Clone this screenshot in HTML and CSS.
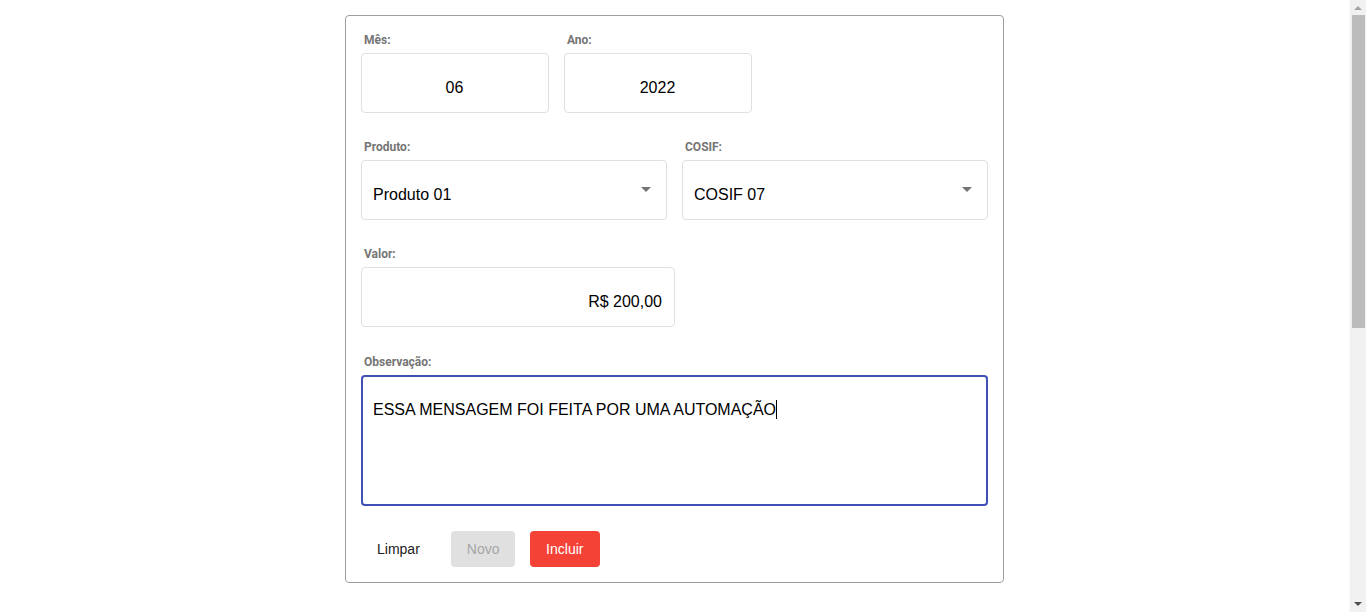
FILE: index.html
```html
<!DOCTYPE html>
<html lang="pt-BR">
<head>
<meta charset="utf-8">
<title>Lançamento</title>
<link rel="stylesheet" href="styles.css">
</head>
<body>
<div class="page">
  <form class="card">
    <div class="row">
      <div class="field w-short">
        <label class="label">Mês:</label>
        <div class="box center">06</div>
      </div>
      <div class="field w-short">
        <label class="label">Ano:</label>
        <div class="box center">2022</div>
      </div>
    </div>
    <div class="row">
      <div class="field w-half">
        <label class="label">Produto:</label>
        <div class="box select">Produto 01<span class="arrow"></span></div>
      </div>
      <div class="field w-half">
        <label class="label">COSIF:</label>
        <div class="box select">COSIF 07<span class="arrow"></span></div>
      </div>
    </div>
    <div class="row">
      <div class="field w-valor">
        <label class="label">Valor:</label>
        <div class="box right">R$ 200,00</div>
      </div>
    </div>
    <div class="row">
      <div class="field w-full">
        <label class="label label-obs">Observação:</label>
        <div class="box textarea">ESSA MENSAGEM FOI FEITA POR UMA AUTOMAÇÃO<span class="caret"></span></div>
      </div>
    </div>
    <div class="actions">
      <button type="button" class="btn btn-text">Limpar</button>
      <button type="button" class="btn btn-disabled">Novo</button>
      <button type="button" class="btn btn-primary">Incluir</button>
    </div>
  </form>
</div>
<div class="scrollbar" aria-hidden="true">
  <span class="sb-up"></span>
  <span class="sb-thumb"></span>
  <span class="sb-down"></span>
</div>
</body>
</html>
```
FILE: styles.css
```css
html, body {
  margin: 0;
  padding: 0;
  background: #ffffff;
}
body {
  font-family: "Liberation Sans", Arial, sans-serif;
  color: #000;
}
.page {
  width: 1349px;
  padding-top: 15px;
  display: flex;
  justify-content: center;
  align-items: flex-start;
}
.card {
  width: 627px;
  border: 1px solid #9e9e9e;
  border-radius: 4px;
  padding: 17px 15px 15px 15px;
  display: flex;
  flex-direction: column;
  gap: 27px;
}
.row {
  display: flex;
  gap: 15px;
}
.field {
  display: flex;
  flex-direction: column;
}
.w-short { width: 188px; }
.w-half { width: 306px; }
.w-valor { width: 314px; }
.w-full { width: 627px; }
.label {
  font-family: Roboto, "Liberation Sans", sans-serif;
  font-weight: 700;
  font-size: 12px;
  line-height: 14px;
  color: #757575;
  padding-left: 3px;
  margin-bottom: 6px;
}
.label-obs {
  margin-top: 1px;
}
.box {
  box-sizing: border-box;
  height: 60px;
  border: 1px solid #e0e0e0;
  border-radius: 4px;
  font-size: 16px;
  line-height: 18px;
  padding: 25px 12px 0 11px;
  position: relative;
  color: #000;
}
.center { text-align: center; }
.right { text-align: right; }
.select { padding-right: 40px; }
.arrow {
  position: absolute;
  right: 15px;
  top: 26px;
  width: 0;
  height: 0;
  border-left: 5px solid transparent;
  border-right: 5px solid transparent;
  border-top: 5px solid #757575;
}
.textarea {
  height: 131px;
  border: 2px solid #3f51b5;
  padding: 23px 11px 0 10px;
}
.caret {
  display: inline-block;
  width: 1px;
  height: 19px;
  background: #000;
  vertical-align: -4px;
}
.actions {
  display: flex;
  gap: 15px;
  margin-top: -2px;
}
.btn {
  height: 36px;
  border: none;
  border-radius: 4px;
  font-family: "Liberation Sans", Arial, sans-serif;
  font-size: 14px;
  padding: 0 16px;
  cursor: pointer;
}
.btn-text {
  background: transparent;
  color: #212121;
}
.btn-disabled {
  background: #e0e0e0;
  color: #a6a6a6;
  width: 64px;
}
.btn-primary {
  background: #f44336;
  color: #ffffff;
  width: 70px;
}
.scrollbar {
  position: fixed;
  top: 0;
  right: 0;
  width: 17px;
  height: 612px;
  background: #f1f1f1;
  border-left: 1px solid #fafafa;
  box-sizing: border-box;
}
.sb-up {
  position: absolute;
  left: 4px;
  top: 6px;
  border-left: 4px solid transparent;
  border-right: 4px solid transparent;
  border-bottom: 4px solid #a3a3a3;
}
.sb-down {
  position: absolute;
  left: 4px;
  bottom: 6px;
  border-left: 4px solid transparent;
  border-right: 4px solid transparent;
  border-top: 4px solid #505050;
}
.sb-thumb {
  position: absolute;
  left: 2px;
  top: 15px;
  width: 13px;
  height: 313px;
  background: #bcbcbc;
}
```
